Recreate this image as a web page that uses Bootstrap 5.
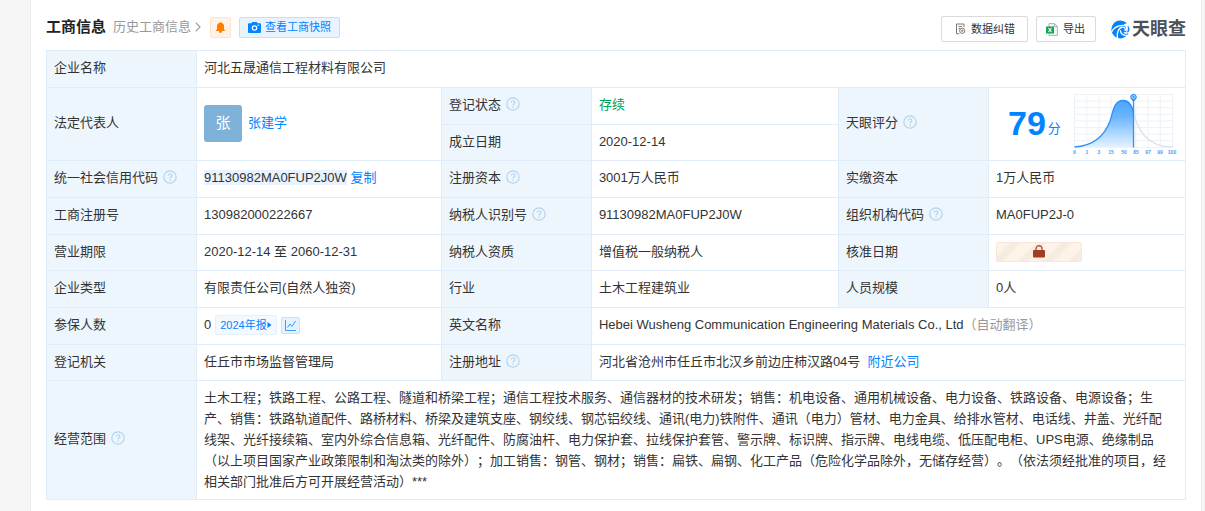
<!DOCTYPE html>
<html lang="zh-CN">
<head>
<meta charset="utf-8">
<meta name="viewport" content="width=device-width, initial-scale=1">
<title>工商信息</title>
<link href="https://cdn.jsdelivr.net/npm/bootstrap@5.3.0/dist/css/bootstrap.min.css" rel="stylesheet">
<style>
  body { font-family: "Liberation Sans", "Noto Sans CJK SC", sans-serif; font-size: 13px; line-height: 20px; color: #333; background: #f5f5f5; text-spacing-trim: space-all; }
  a { color: #0084ff; text-decoration: none; }
  svg { display: block; flex-shrink: 0; }
  .panel { margin: 0 3px 0 30px; padding: 16px 15px 24px; background: #fff; border: solid #ececec; border-width: 0 1px; }
  .panel-head { margin-bottom: 8px; min-height: 26px; }
  .panel-title { font-size: 15px; line-height: 22px; font-weight: 700; margin: 0 7px 0 0; color: #222; }
  .history-link { color: #999; }
  .bell-btn { width: 21px; height: 21px; background: #fff2e6; border: 1px solid #ffe2cc; border-radius: 2px; margin: 0 8px 0 9px; }
  .snap-btn { height: 21px; padding: 0 8px; background: #e8f3ff; border: 1px solid #c2e0fd; border-radius: 2px; color: #0084ff; font-size: 11px; line-height: 19px; gap: 4px; }
  .tool-btn { height: 26px; padding: 0 12px 0 13px; background: #fff; border: 1px solid #dadada; border-radius: 2px; color: #333; font-size: 11px; line-height: 20px; gap: 5px; }
  .tool-btn.export { padding: 0 10px 0 9px; }
  .brand { color: #4d5157; font-size: 18px; font-weight: 700; line-height: 24px; gap: 2px; margin-left: 7px; }
  .info { table-layout: fixed; width: 100%; margin: 0; border-collapse: collapse; }
  .info th, .info td { border: 1px solid #e0edf8; padding: 0 7px 2px; vertical-align: middle; font-weight: 400; }
  .info th { background: #eef6fd; }
  .info tr { height: 37px; }
  .info tr:nth-child(3n) { height: 36px; }
  .info .scope-row { height: 119px; }
  .info .scope-row td { line-height: 21px; padding-right: 14px; }
  .col-label { width: 150px; }
  .col-first { width: 21.5%; }
  .col-second { width: 21.7%; }
  .help { display: inline-block; width: 14px; height: 14px; vertical-align: -2px; margin-left: 1px; }
  .avatar { width: 38px; height: 37px; border-radius: 3px; background: #7fb2d9; color: #fff; font-size: 15px; margin-right: 6px; }
  .code-mark { background: #e8f3ff; }
  .year-tag { height: 20px; padding: 0 4px; font-size: 11px; line-height: 18px; background: #f3f9ff; border: 1px solid #e3f1fe; border-radius: 2px; }
  .trend-btn { width: 19px; height: 17px; background: #e5f2ff; border: 1px solid #c5e1fc; border-radius: 2px; }
  .locked { width: 86px; height: 20px; border: 1px solid #f7e8da; border-radius: 2px; background: repeating-linear-gradient(135deg, #fdf3e9 0 8px, #f6ebe0 11px 15px, #fdf3e9 18px); }
  .score { font-size: 34px; line-height: 36px; font-weight: 700; color: #0084ff; }
  .score-unit { color: #0084ff; padding-top: 12px; margin: 0 8px 0 2px; }
  .auto { color: #999; }
  .state-on { color: #00a05a; }
</style>
</head>
<body>
<svg width="0" height="0" class="position-absolute" aria-hidden="true">
  <symbol id="q" viewBox="0 0 14 14"><circle cx="7" cy="7" r="6.2" fill="none" stroke="#b5d3ec" stroke-width="1.2"/><path d="M5.2 5.6C5.2 3.2 8.9 3.2 8.9 5.4C8.9 6.7 7.1 6.8 7.1 8.4" fill="none" stroke="#b5d3ec" stroke-width="1.2"/><circle cx="7.1" cy="10.2" r=".8" fill="#b5d3ec"/></symbol>
</svg>
<main class="panel">
  <header class="panel-head d-flex align-items-center justify-content-between">
    <div class="d-flex align-items-center pb-1">
      <h2 class="panel-title">工商信息</h2>
      <a href="#" class="history-link d-flex align-items-center">历史工商信息<svg class="ms-1" width="6" height="10" viewBox="0 0 6 10"><path d="M.7 .7L5 5L.7 9.3" fill="none" stroke="#999" stroke-width="1.1"/></svg></a>
      <button type="button" class="btn bell-btn p-0 d-flex align-items-center justify-content-center" aria-label="订阅提醒"><svg width="9" height="11" viewBox="0 0 9 11"><path d="M4.5 0C5 0 5.2.3 5.2.8C7.2 1.2 8 2.6 8 4.4V7.3L9 8.6V9H0V8.6L1 7.3V4.4C1 2.6 1.8 1.2 3.8.8C3.8.3 4 0 4.5 0ZM3 9H6C5.8 10.5 5.2 11 4.5 11S3.2 10.5 3 9Z" fill="#ff7d00"/></svg></button>
      <button type="button" class="btn snap-btn d-flex align-items-center"><svg width="13" height="11" viewBox="0 0 13 11"><path d="M3.6 1.2L4.2 0H8.8L9.4 1.2H12Q13 1.2 13 2.2V10Q13 11 12 11H1Q0 11 0 10V2.2Q0 1.2 1 1.2Z" fill="#0084ff"/><circle cx="6.5" cy="6" r="2.2" fill="#0084ff" stroke="#fff" stroke-width="1.2"/><path d="M9.5 3.2H11.2" stroke="#fff"/></svg>查看工商快照</button>
    </div>
    <div class="d-flex align-items-center gap-2">
      <button type="button" class="btn tool-btn d-flex align-items-center"><svg width="11" height="12" viewBox="0 0 11 12"><path d="M9 4V1H1.5V10.7H4.3M3.5 3.4H7M3.5 5.5H5" fill="none" stroke="#777"/><circle cx="7.2" cy="7.8" r="2.6" fill="#fff" stroke="#777"/><path d="M7.2 6.4V8.6M6 7.9H8.4" stroke="#9a6450" stroke-width=".9"/></svg>数据纠错</button>
      <button type="button" class="btn tool-btn export d-flex align-items-center"><svg width="12" height="13" viewBox="0 0 12 13"><path d="M3 .6H8.6L11.4 3.4V12.4H3Z" fill="#f5f7f6" stroke="#a9b5b0"/><path d="M8.4.8V3.6H11.2" fill="none" stroke="#a9b5b0"/><rect y="3.5" width="8" height="7" fill="#17a355"/><path d="M2.5 5L5.5 9M5.5 5L2.5 9" stroke="#fff" stroke-width="1.1"/></svg>导出</button>
      <div class="brand d-flex align-items-center"><svg width="19" height="19" viewBox="0 0 19 19"><path d="M16 3.3A9 9 0 1 0 17.6 13C15.9 14 13.6 14 12 12.4C13.4 12.7 15.3 12.2 16.2 10.6C15.3 10.9 14.6 10.9 13.9 10.7C16 8.8 14.8 5.6 11.6 5.6C12.8 4.3 14.6 3.5 16 3.3Z" fill="#0084ff"/><path d="M16.2 5.2C18.4 6.8 19 9.2 18 11.6C17.4 12.3 16.6 12.6 15.8 12.4C17.3 10 17.3 7.6 16.2 5.2Z" fill="#0084ff"/><path d="M.6 12.2C2.2 8.4 6 5.2 12.4 5.3" fill="none" stroke="#fff" stroke-width="1.2"/><path d="M13.7 10.8C15.2 9 13.6 7 11.6 7.2C7.8 7.6 5.6 12 6.4 18.4" fill="none" stroke="#fff" stroke-width="1.3"/><path d="M9.4 10.2C9.4 13.6 12 15.7 16.4 15.2" fill="none" stroke="#fff" stroke-width="1.3"/></svg><span>天眼查</span></div>
    </div>
  </header>

  <table class="info">
    <colgroup><col class="col-label"><col class="col-first"><col class="col-label"><col class="col-second"><col class="col-label"><col></colgroup>
    <tbody>
      <tr><th scope="row">企业名称</th><td colspan="5">河北五晟通信工程材料有限公司</td></tr>
      <tr>
        <th scope="row" rowspan="2">法定代表人</th>
        <td rowspan="2"><div class="d-flex align-items-center"><span class="avatar d-flex align-items-center justify-content-center">张</span><a href="#">张建学</a></div></td>
        <th scope="row">登记状态 <svg class="help"><use href="#q"/></svg></th><td class="state-on">存续</td>
        <th scope="row" rowspan="2">天眼评分 <svg class="help"><use href="#q"/></svg></th>
        <td rowspan="2"><div class="d-flex align-items-center ps-2 ms-1">
          <span class="score">79</span><span class="score-unit">分</span>
          <svg width="110" height="64" viewBox="0 0 110 64" role="img" aria-label="评分分布">
            <defs><linearGradient id="fill" x2="0" y2="1"><stop stop-color="#4ba5ff"/><stop offset=".35" stop-color="#6bb5ff"/><stop offset="1" stop-color="#e4f2ff"/></linearGradient></defs>
            <path d="M5.5 3.5H103.5M5.5 10.1H103.5M5.5 16.7H103.5M5.5 23.3H103.5M5.5 29.9H103.5M5.5 36.5H103.5M5.5 43.1H103.5M5.5 49.7H103.5M5.5 56.3H103.5M5.5 3.5V56.3M17.75 3.5V56.3M30 3.5V56.3M42.25 3.5V56.3M54.5 3.5V56.3M66.75 3.5V56.3M79 3.5V56.3M91.25 3.5V56.3M103.5 3.5V56.3" stroke="#edf2f8" fill="none"/>
            <path d="M64.5 22C69 38 77 56 103.5 56" fill="none" stroke="#d7e4f0" stroke-width="1.3"/>
            <path d="M5.5 56C24 55 35 46 41 30C44 21 45 9.5 54 9.5C61 9.5 63.5 17 64.5 22V56Z" fill="url(#fill)"/>
            <path d="M5.5 56C24 55 35 46 41 30C44 21 45 9.5 54 9.5C61 9.5 63.5 17 64.5 22" fill="none" stroke="#2f91f5" stroke-width="1.3"/>
            <path d="M64.5 8V56.5" stroke="#2f91f5" stroke-width="1.3"/>
            <path d="M64.5 11L61.8 7.8A3.2 3.2 0 1 1 67.2 7.8Z" fill="#2f91f5"/><circle cx="64.5" cy="6" r="1.6" fill="#2f91f5" stroke="#d8ebff" stroke-width=".8"/>
            <g font-size="5" font-weight="700" fill="#4aa0f6" text-anchor="middle"><text x="5.5" y="63">0</text><text x="18" y="63">1</text><text x="30" y="63">3</text><text x="42" y="63">15</text><text x="55" y="63">50</text><text x="67" y="63">85</text><text x="79" y="63">97</text><text x="91" y="63">99</text><text x="103" y="63">100</text></g>
          </svg>
        </div></td>
      </tr>
      <tr><th scope="row">成立日期</th><td>2020-12-14</td></tr>
      <tr><th scope="row">统一社会信用代码 <svg class="help"><use href="#q"/></svg></th><td><span class="code-mark">91130982MA0FUP2J0W</span> <a href="#">复制</a></td><th scope="row">注册资本 <svg class="help"><use href="#q"/></svg></th><td>3001万人民币</td><th scope="row">实缴资本</th><td>1万人民币</td></tr>
      <tr><th scope="row">工商注册号</th><td>130982000222667</td><th scope="row">纳税人识别号 <svg class="help"><use href="#q"/></svg></th><td>91130982MA0FUP2J0W</td><th scope="row">组织机构代码 <svg class="help"><use href="#q"/></svg></th><td>MA0FUP2J-0</td></tr>
      <tr><th scope="row">营业期限</th><td>2020-12-14 至 2060-12-31</td><th scope="row">纳税人资质</th><td>增值税一般纳税人</td><th scope="row">核准日期</th>
        <td><button type="button" class="btn locked p-0 d-flex align-items-center justify-content-center" aria-label="解锁核准日期"><svg width="12" height="13" viewBox="0 0 12 13"><path d="M3 6V3.8A3 3 0 0 1 9 3.8V6" fill="none" stroke="#b5563d" stroke-width="1.4"/><rect y="5" width="12" height="7.6" rx="1" fill="#a23c24"/></svg></button></td></tr>
      <tr><th scope="row">企业类型</th><td>有限责任公司(自然人独资)</td><th scope="row">行业</th><td>土木工程建筑业</td><th scope="row">人员规模</th><td>0人</td></tr>
      <tr><th scope="row">参保人数</th><td><div class="d-flex align-items-center gap-1"><span>0</span><a href="#" class="year-tag d-flex align-items-center">2024年报<svg width="5" height="6" viewBox="0 0 5 6"><path d="M.5 0L4.5 3L.5 6Z" fill="#0084ff"/></svg></a><button type="button" class="btn trend-btn p-0 d-flex align-items-center justify-content-center" aria-label="趋势图"><svg width="11" height="11" viewBox="0 0 11 11"><path d="M.5 0V10.5H11M2.5 7.5L5 4L7 6.5L10.5 1" fill="none" stroke="#3c9cf8"/></svg></button></div></td><th scope="row">英文名称</th><td colspan="3">Hebei Wusheng Communication Engineering Materials Co., Ltd<span class="auto">（自动翻译）</span></td></tr>
      <tr><th scope="row">登记机关</th><td>任丘市市场监督管理局</td><th scope="row">注册地址 <svg class="help"><use href="#q"/></svg></th><td colspan="3">河北省沧州市任丘市北汉乡前边庄柿汉路04号&nbsp; <a href="#">附近公司</a></td></tr>
      <tr class="scope-row"><th scope="row">经营范围 <svg class="help"><use href="#q"/></svg></th><td colspan="5">土木工程；铁路工程、公路工程、隧道和桥梁工程；通信工程技术服务、通信器材的技术研发；销售：机电设备、通用机械设备、电力设备、铁路设备、电源设备；生产、销售：铁路轨道配件、路桥材料、桥梁及建筑支座、钢绞线、钢芯铝绞线、通讯(电力)铁附件、通讯（电力）管材、电力金具、给排水管材、电话线、井盖、光纤配线架、光纤接续箱、室内外综合信息箱、光纤配件、防腐油杆、电力保护套、拉线保护套管、警示牌、标识牌、指示牌、电线电缆、低压配电柜、UPS电源、绝缘制品（以上项目国家产业政策限制和淘汰类的除外）；加工销售：钢管、钢材；销售：扁铁、扁钢、化工产品（危险化学品除外，无储存经营）。（依法须经批准的项目，经相关部门批准后方可开展经营活动）***</td></tr>
    </tbody>
  </table>
</main>
<script src="https://cdn.jsdelivr.net/npm/bootstrap@5.3.0/dist/js/bootstrap.bundle.min.js"></script>
</body>
</html>
